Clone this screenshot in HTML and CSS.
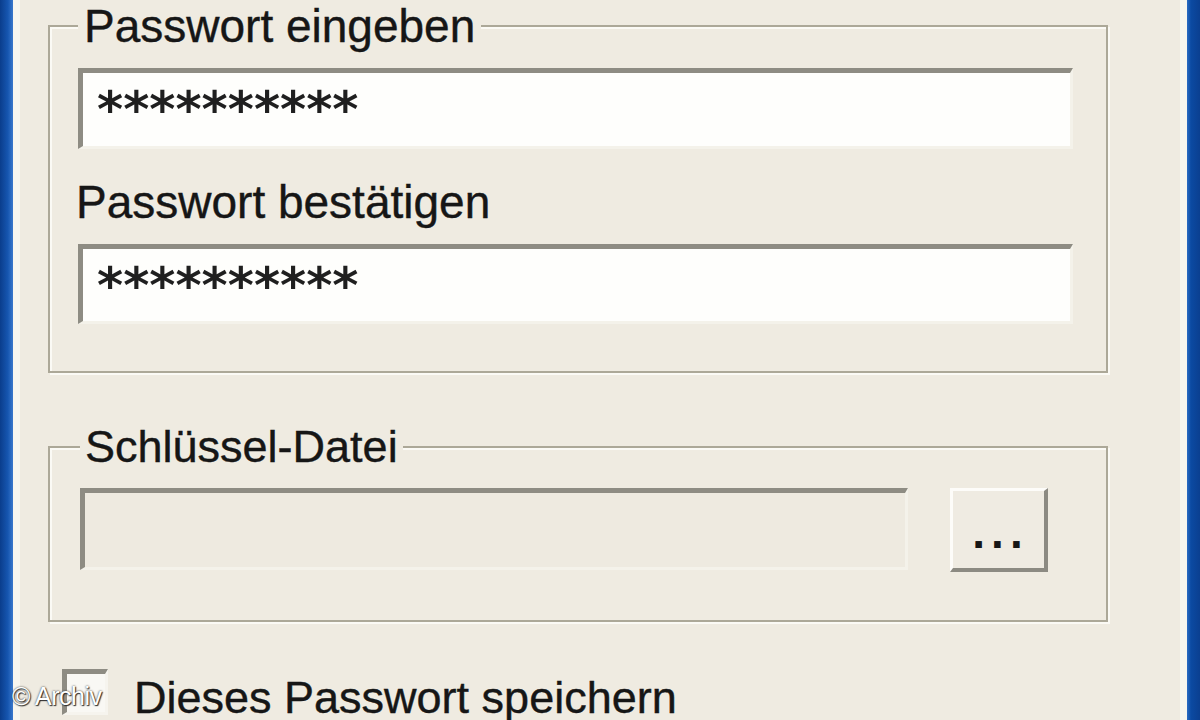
FILE: index.html
```html
<!DOCTYPE html>
<html lang="de">
<head>
<meta charset="utf-8">
<title>Passwort</title>
<link rel="stylesheet" href="styles.css">
</head>
<body>
<div class="window">
  <div class="frame frame-left"></div>
  <main class="dialog">
    <fieldset class="group group-password">
      <legend>Passwort eingeben</legend>
      <div class="field field-first"><span class="mask">**********</span></div>
      <div class="label">Passwort bestätigen</div>
      <div class="field field-second"><span class="mask">**********</span></div>
    </fieldset>
    <fieldset class="group group-key">
      <legend class="legend-key">Schlüssel-Datei</legend>
      <div class="key-row">
        <div class="field field-disabled"></div>
        <div class="btn">...</div>
      </div>
    </fieldset>
    <div class="check-row">
      <span class="checkbox"></span>
      <span class="check-label">Dieses Passwort speichern</span>
    </div>
  </main>
  <div class="frame frame-right"></div>
  <div class="watermark">© Archiv</div>
</div>
</body>
</html>
```
FILE: styles.css
```css
html, body {
  margin: 0;
  height: 100%;
}
body {
  background: #efebe1;
  overflow: hidden;
  font-family: "Liberation Sans", Arial, sans-serif;
  color: #161616;
}
.window {
  display: flex;
  height: 720px;
  position: relative;
}
.frame {
  width: 13px;
  flex: none;
}
.frame-left {
  background: linear-gradient(90deg, #0a3d8c, #1656b0 60%, #3a78cc);
}
.frame-right {
  background: linear-gradient(90deg, #2b6cc4, #0b4aa2 30%, #0a3f90);
}
.dialog {
  flex: 1;
  border-left: 7px solid #f8f6ef;
  border-right: 7px solid #f7f5ee;
  padding: 0 72px 0 28px;
  display: flex;
  flex-direction: column;
}
.group {
  margin: 0;
  min-width: 0;
  border: 2px solid #aca898;
  box-shadow: inset 2px 2px 0 #fbfaf5, 2px 2px 0 #fbfaf5;
}
.group legend {
  font-size: 46px;
  line-height: 40px;
  padding: 0 6px;
  background: #efebe1;
  -webkit-text-stroke: 0.4px #161616;
}
.group-password {
  margin-top: 6px;
  padding: 0 33px 47px 28px;
}
.group-key {
  margin-top: 54px;
  padding: 0 58px 48px 30px;
}
.group legend.legend-key {
  font-size: 45px;
  padding: 0 5px;
}
.field {
  box-sizing: border-box;
  background: #fefefc;
  border-style: solid;
  border-width: 5px 3px 3px 5px;
  border-color: #8e8c83 #f4f2ea #f4f2ea #8e8c83;
  padding: 7px 0 0 14px;
}
.field-first {
  height: 81px;
  margin-top: 22px;
}
.field-second {
  height: 80px;
  margin-top: 22px;
}
.mask {
  font-family: "DejaVu Sans", sans-serif;
  font-weight: bold;
  font-size: 50px;
  line-height: 60px;
  letter-spacing: 0;
  color: #1f1f1f;
}
.label {
  margin: 33px 0 0 -2px;
  font-size: 46px;
  line-height: 40px;
  -webkit-text-stroke: 0.4px #161616;
}
.key-row {
  display: flex;
  align-items: flex-start;
  gap: 42px;
  margin-top: 21px;
}
.field-disabled {
  flex: 1;
  height: 82px;
  background: #eeeae0;
  padding: 0;
}
.btn {
  width: 98px;
  height: 84px;
  box-sizing: border-box;
  border-style: solid;
  border-width: 3px 4px 4px 3px;
  border-color: #fdfcf9 #8c8a82 #8c8a82 #fdfcf9;
  background: #efebe2;
  font-size: 46px;
  font-weight: bold;
  line-height: 40px;
  letter-spacing: 6px;
  text-indent: 4px;
  text-align: center;
  padding-top: 21px;
}
.check-row {
  display: flex;
  align-items: flex-start;
  margin: 47px 0 0 14px;
}
.checkbox {
  width: 46px;
  height: 46px;
  flex: none;
  box-sizing: border-box;
  border-style: solid;
  border-width: 5px 3px 3px 5px;
  border-color: #8e8c83 #f6f4ee #f6f4ee #8e8c83;
  background: #f9f8f4;
}
.check-label {
  margin: 9px 0 0 26px;
  font-size: 45px;
  line-height: 40px;
  white-space: nowrap;
  -webkit-text-stroke: 0.4px #161616;
}
.watermark {
  position: absolute;
  left: 12px;
  top: 684px;
  font-size: 25px;
  line-height: 25px;
  letter-spacing: -0.5px;
  color: #fff;
  text-shadow: 0 0 2px #222, 1px 1px 1px #333;
}
```
